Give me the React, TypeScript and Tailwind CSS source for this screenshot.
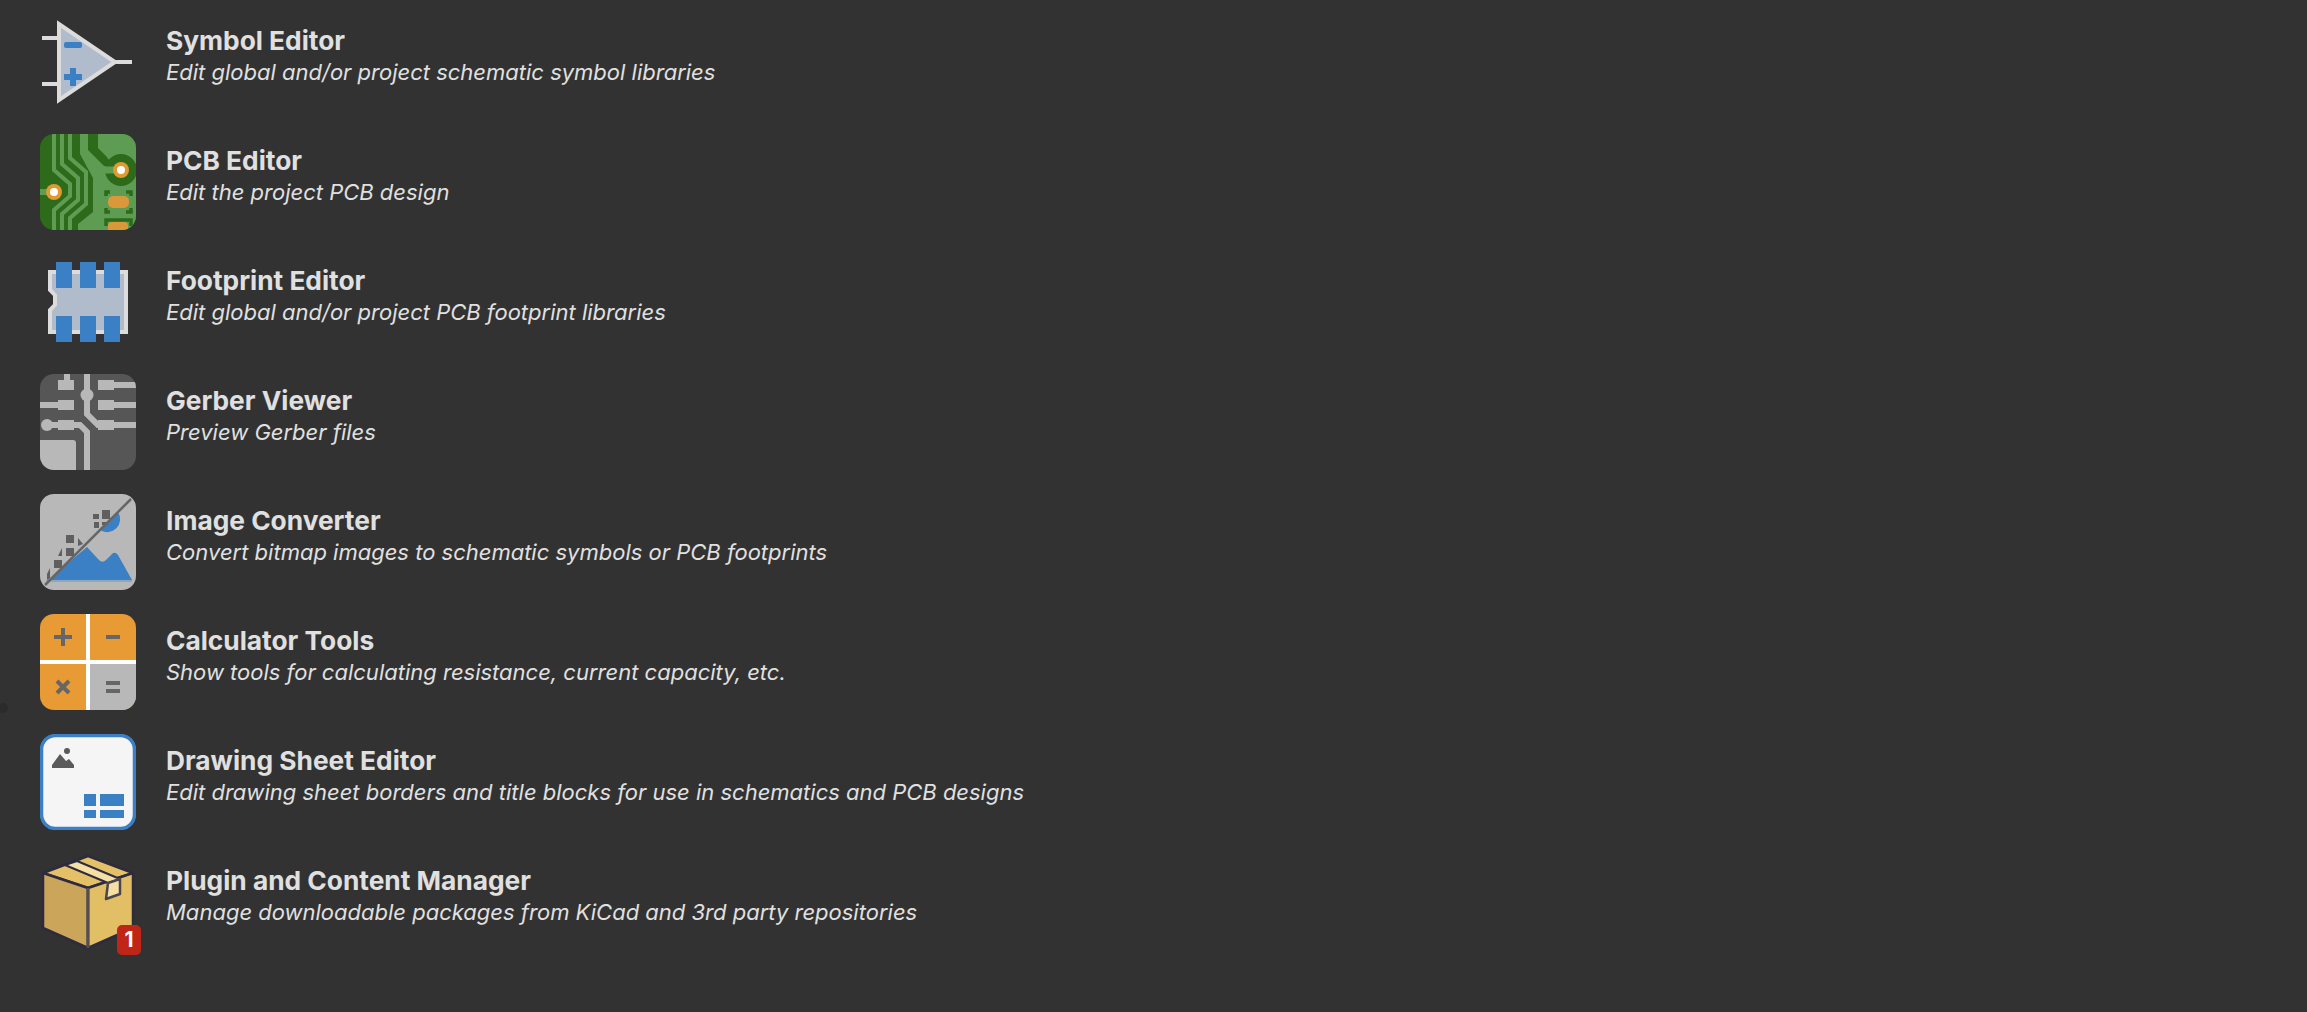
import React from "react";

const SymbolIcon = () => (
  <svg viewBox="0 0 96 96" className="h-24 w-24">
    <path d="M2 24H18M2 70H18M76 48H92" stroke="#dcdcdc" strokeWidth="4" fill="none" />
    <path d="M19 10V86L75 48Z" fill="#b0bccb" stroke="#dcdcdc" strokeWidth="4" />
    <rect x="24" y="28" width="18" height="6" rx="2" fill="#3b7fc4" />
    <path d="M30 54H36V60H42V66H36V72H30V66H24V60H30Z" fill="#3b7fc4" />
  </svg>
);

const PcbIcon = () => (
  <svg viewBox="0 0 96 96" className="h-24 w-24">
    <defs>
      <clipPath id="pcbclip">
        <rect width="96" height="96" rx="14" />
      </clipPath>
    </defs>
    <g clipPath="url(#pcbclip)">
      <rect width="96" height="96" fill="#2d6a1a" />
      <path d="M58 0H96V30H72L66 22L58 14Z" fill="#5e9c54" />
      <path d="M40 0H48V16L64 32H96V96H38V90L53 78V44L40 20Z" fill="#5e9c54" />
      <circle cx="81" cy="36" r="16" fill="#2d6a1a" />
      <g stroke="#5e9c54" fill="none">
        <path d="M14 0V36L30 50V62L14 76V96" strokeWidth="4" />
        <path d="M22 0V30L38 44V66L22 80V96" strokeWidth="4" />
        <path d="M30 0V24L46 38V70L30 84V96" strokeWidth="4" />
        <path d="M60 36H80" strokeWidth="7" />
        <path d="M0 58H14" strokeWidth="6" />
      </g>
      <g stroke="#2d6a1a" strokeWidth="3.5" fill="none">
        <path d="M66 62V58H70M86 58H91V62M66 74V78H70M86 78H91V74" />
        <path d="M66 92V86H91V92" />
      </g>
      <rect x="68" y="62" width="21" height="12" rx="5" fill="#d9983a" />
      <rect x="68" y="88" width="20" height="12" rx="4" fill="#d9983a" />
      <circle cx="81" cy="36" r="8" fill="#e09a32" />
      <circle cx="81" cy="36" r="4" fill="#ffffff" />
      <circle cx="14" cy="58" r="8" fill="#e09a32" />
      <circle cx="14" cy="58" r="4" fill="#ffffff" />
    </g>
  </svg>
);

const FootprintIcon = () => (
  <svg viewBox="0 0 96 96" className="h-24 w-24">
    <path d="M10 18H86V78H10V56L15 51V41L10 36Z" fill="#b0bccb" stroke="#dcdcdc" strokeWidth="4" />
    <g fill="#3b7fc4">
      <rect x="16" y="8" width="16" height="26" />
      <rect x="40" y="8" width="16" height="26" />
      <rect x="64" y="8" width="16" height="26" />
      <rect x="16" y="62" width="16" height="26" />
      <rect x="40" y="62" width="16" height="26" />
      <rect x="64" y="62" width="16" height="26" />
    </g>
  </svg>
);

const GerberIcon = () => (
  <svg viewBox="0 0 96 96" className="h-24 w-24">
    <defs>
      <clipPath id="gerberclip">
        <rect width="96" height="96" rx="14" />
      </clipPath>
    </defs>
    <g clipPath="url(#gerberclip)">
      <rect width="96" height="96" fill="#565656" />
      <g fill="#b8b8b8">
        <rect x="24" y="0" width="6" height="8" />
        <rect x="18" y="6" width="16" height="10" />
        <rect x="18" y="26" width="16" height="10" />
        <rect x="0" y="28" width="20" height="6" />
        <rect x="58" y="6" width="16" height="10" />
        <rect x="70" y="8" width="26" height="6" />
        <rect x="58" y="26" width="16" height="10" />
        <rect x="70" y="28" width="26" height="6" />
        <rect x="58" y="46" width="16" height="10" />
        <rect x="18" y="46" width="16" height="10" />
        <circle cx="47" cy="21" r="6.5" />
        <circle cx="7" cy="51" r="6" />
        <path d="M0 66H33Q36 66 36 69V96H0Z" />
      </g>
      <g stroke="#b8b8b8" strokeWidth="6" fill="none">
        <path d="M47 0V40L58 51H96" />
        <path d="M7 51H40L47 58V96" />
      </g>
    </g>
  </svg>
);

const ImageIcon = () => (
  <svg viewBox="0 0 96 96" className="h-24 w-24">
    <rect width="96" height="96" rx="14" fill="#b8b8b8" />
    <path d="M78 18A13 13 0 0 1 60 36Z" fill="#3b7fc4" />
    <path d="M8 86L47 53L58 65Q62 70 66 66L72 60Q75 57 78 61L92 86Z" fill="#3b7fc4" />
    <rect x="6" y="86" width="86" height="2" fill="#8fa6bd" />
    <g fill="#5f5f5f">
      <rect x="62" y="16" width="8" height="9" />
      <rect x="53" y="20" width="6" height="5" />
      <rect x="54" y="28" width="5" height="6" />
      <rect x="62" y="28" width="6" height="3" />
      <rect x="26" y="41" width="8" height="8" />
      <rect x="26" y="54" width="8" height="8" />
      <rect x="14" y="66" width="8" height="8" />
      <path d="M18 62H22V54Z" />
      <path d="M38 44L43 50L38 52Z" />
      <path d="M7 86V80L10 74V84Z" />
    </g>
    <path d="M5 91L91 5" stroke="#666666" strokeWidth="2.5" />
  </svg>
);

const CalculatorIcon = () => (
  <svg viewBox="0 0 96 96" className="h-24 w-24">
    <defs>
      <clipPath id="calcclip">
        <rect width="96" height="96" rx="14" />
      </clipPath>
    </defs>
    <g clipPath="url(#calcclip)">
      <rect width="96" height="96" fill="#e89a34" />
      <rect x="48" y="48" width="48" height="48" fill="#b8b8b8" />
      <rect x="46" y="0" width="4" height="96" fill="#ffffff" />
      <rect x="0" y="46" width="96" height="4" fill="#ffffff" />
      <path d="M14 23H32M23 14V32" stroke="#666666" strokeWidth="4" />
      <path d="M66 23H80" stroke="#666666" strokeWidth="4" />
      <path d="M17 67L29 79M29 67L17 79" stroke="#666666" strokeWidth="4" />
      <path d="M66 69H80M66 77H80" stroke="#666666" strokeWidth="4" />
    </g>
  </svg>
);

const DrawingIcon = () => (
  <svg viewBox="0 0 96 96" className="h-24 w-24">
    <rect x="1.5" y="1.5" width="93" height="93" rx="14" fill="#f5f5f5" stroke="#3b7fc4" strokeWidth="3.5" />
    <circle cx="27" cy="17" r="3" fill="#5a5a5a" />
    <path d="M12 34V31L20 20L26 27L29 25L34 31V34Z" fill="#5a5a5a" />
    <g fill="#3b7fc4">
      <rect x="44" y="60" width="12" height="12" />
      <rect x="60" y="60" width="24" height="12" />
      <rect x="44" y="76" width="12" height="8" />
      <rect x="60" y="76" width="24" height="8" />
    </g>
  </svg>
);

const PackageIcon = () => (
  <svg viewBox="0 0 96 96" className="h-24 w-24">
    <path d="M48 2L93 19L48 34L3 19Z" fill="#e4c067" stroke="#2e2a40" strokeWidth="2.5" strokeLinejoin="round" />
    <path d="M3 19L48 34V94L3 74Z" fill="#cba55a" stroke="#2e2a40" strokeWidth="2.5" strokeLinejoin="round" />
    <path d="M93 19L48 34V94L93 74Z" fill="#e2bf65" stroke="#2e2a40" strokeWidth="2.5" strokeLinejoin="round" />
    <path d="M25 11L37 7L80 25L68 29Z" fill="#f5dfa5" stroke="#2e2a40" strokeWidth="2" strokeLinejoin="round" />
    <path d="M68 29L80 25V40L66 45Z" fill="#f5dfa5" stroke="#4a4650" strokeWidth="2.5" strokeLinejoin="round" />
    <path d="M48 34V94" stroke="#54504f" strokeWidth="3" />
  </svg>
);

const tools = [
  { name: "Symbol Editor", desc: "Edit global and/or project schematic symbol libraries", icon: <SymbolIcon /> },
  { name: "PCB Editor", desc: "Edit the project PCB design", icon: <PcbIcon /> },
  { name: "Footprint Editor", desc: "Edit global and/or project PCB footprint libraries", icon: <FootprintIcon /> },
  { name: "Gerber Viewer", desc: "Preview Gerber files", icon: <GerberIcon /> },
  { name: "Image Converter", desc: "Convert bitmap images to schematic symbols or PCB footprints", icon: <ImageIcon /> },
  { name: "Calculator Tools", desc: "Show tools for calculating resistance, current capacity, etc.", icon: <CalculatorIcon /> },
  { name: "Drawing Sheet Editor", desc: "Edit drawing sheet borders and title blocks for use in schematics and PCB designs", icon: <DrawingIcon /> },
  { name: "Plugin and Content Manager", desc: "Manage downloadable packages from KiCad and 3rd party repositories", icon: <PackageIcon />, badge: 1 },
];

const App = () => {
  return (
    <div className="relative h-[1012px] w-[2307px] overflow-hidden bg-[#323232] pt-[14px] pl-10 font-['Inter',sans-serif] text-[#e0e0e0] flex flex-col gap-6">
      <div className="absolute left-[-2px] top-[703px] h-[10px] w-[10px] rounded-full bg-[#2b2b2b]" />
      {tools.map((tool) => (
        <div key={tool.name} className="flex items-start gap-[30px]">
          <div className="relative h-24 w-24 shrink-0">
            {tool.icon}
            {tool.badge && (
              <div className="absolute right-[-5px] bottom-[-5px] flex h-[30px] w-6 items-center justify-center rounded-[5px] bg-[#bf2618] text-[21px] font-bold text-white">
                {tool.badge}
              </div>
            )}
          </div>
          <div className="flex flex-col pt-[10px]">
            <div className="text-[26.3px] leading-[34px] font-bold">{tool.name}</div>
            <div className="text-[22px] leading-[28px] italic">{tool.desc}</div>
          </div>
        </div>
      ))}
    </div>
  );
};

export default App;
